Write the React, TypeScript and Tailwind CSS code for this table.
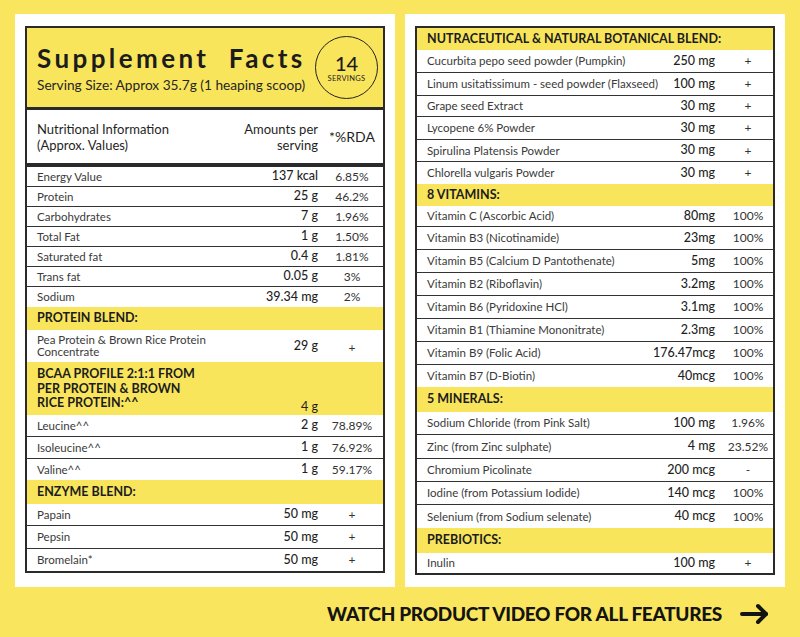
import React from 'react'

const font = { fontFamily: 'Lato, "Open Sans", sans-serif' }

type Row = { name: string; amt: string; rda: string; h: string }

const nutrition: Row[] = [
  { name: 'Energy Value', amt: '137 kcal', rda: '6.85%', h: 'h-[20px]' },
  { name: 'Protein', amt: '25 g', rda: '46.2%', h: 'h-[20px]' },
  { name: 'Carbohydrates', amt: '7 g', rda: '1.96%', h: 'h-[20px]' },
  { name: 'Total Fat', amt: '1 g', rda: '1.50%', h: 'h-[20px]' },
  { name: 'Saturated fat', amt: '0.4 g', rda: '1.81%', h: 'h-[20px]' },
  { name: 'Trans fat', amt: '0.05 g', rda: '3%', h: 'h-[20px]' },
  { name: 'Sodium', amt: '39.34 mg', rda: '2%', h: 'h-[20px]' },
]

const aminos: Row[] = [
  { name: 'Leucine^^', amt: '2 g', rda: '78.89%', h: 'h-[22px]' },
  { name: 'Isoleucine^^', amt: '1 g', rda: '76.92%', h: 'h-[22px]' },
  { name: 'Valine^^', amt: '1 g', rda: '59.17%', h: 'h-[21px]' },
]

const enzymes: Row[] = [
  { name: 'Papain', amt: '50 mg', rda: '+', h: 'h-[22px]' },
  { name: 'Pepsin', amt: '50 mg', rda: '+', h: 'h-[23px]' },
  { name: 'Bromelain*', amt: '50 mg', rda: '+', h: 'h-[22px]' },
]

const botanicals: Row[] = [
  { name: 'Cucurbita pepo seed powder (Pumpkin)', amt: '250 mg', rda: '+', h: 'h-[23px]' },
  { name: 'Linum usitatissimum - seed powder (Flaxseed)', amt: '100 mg', rda: '+', h: 'h-[23px]' },
  { name: 'Grape seed Extract', amt: '30 mg', rda: '+', h: 'h-[21px]' },
  { name: 'Lycopene 6% Powder', amt: '30 mg', rda: '+', h: 'h-[23px]' },
  { name: 'Spirulina Platensis Powder', amt: '30 mg', rda: '+', h: 'h-[22px]' },
  { name: 'Chlorella vulgaris Powder', amt: '30 mg', rda: '+', h: 'h-[22px]' },
]

const vitamins: Row[] = [
  { name: 'Vitamin C (Ascorbic Acid)', amt: '80mg', rda: '100%', h: 'h-[21px]' },
  { name: 'Vitamin B3 (Nicotinamide)', amt: '23mg', rda: '100%', h: 'h-[23px]' },
  { name: 'Vitamin B5 (Calcium D Pantothenate)', amt: '5mg', rda: '100%', h: 'h-[23px]' },
  { name: 'Vitamin B2 (Riboflavin)', amt: '3.2mg', rda: '100%', h: 'h-[23px]' },
  { name: 'Vitamin B6 (Pyridoxine HCl)', amt: '3.1mg', rda: '100%', h: 'h-[23px]' },
  { name: 'Vitamin B1 (Thiamine Mononitrate)', amt: '2.3mg', rda: '100%', h: 'h-[23px]' },
  { name: 'Vitamin B9 (Folic Acid)', amt: '176.47mcg', rda: '100%', h: 'h-[23px]' },
  { name: 'Vitamin B7 (D-Biotin)', amt: '40mcg', rda: '100%', h: 'h-[22px]' },
]

const minerals: Row[] = [
  { name: 'Sodium Chloride (from Pink Salt)', amt: '100 mg', rda: '1.96%', h: 'h-[23px]' },
  { name: 'Zinc (from Zinc sulphate)', amt: '4 mg', rda: '23.52%', h: 'h-[24px]' },
  { name: 'Chromium Picolinate', amt: '200 mcg', rda: '-', h: 'h-[23px]' },
  { name: 'Iodine (from Potassium Iodide)', amt: '140 mcg', rda: '100%', h: 'h-[23px]' },
  { name: 'Selenium (from Sodium selenate)', amt: '40 mcg', rda: '100%', h: 'h-[23px]' },
]

function LeftRow({ r, last }: { r: Row; last?: boolean }) {
  return (
    <div className={`${r.h} flex items-center text-[11.5px] ${last ? '' : 'border-b-[1.5px] border-[#333]'}`}>
      <div className="flex-1 pl-[10px] text-[#3a3a3a]">{r.name}</div>
      <div className="pr-[3px] text-right text-[12.5px] font-medium text-[#1f1f1f]">{r.amt}</div>
      <div className="w-[62px] text-center text-[12px] text-[#333]">{r.rda}</div>
    </div>
  )
}

function RightRow({ r, last }: { r: Row; last?: boolean }) {
  return (
    <div className={`${r.h} flex items-center ${last ? '' : 'border-b-[1.5px] border-[#333]'}`}>
      <div className="flex-1 pl-[10px] text-[11.5px] text-[#3a3a3a] whitespace-nowrap">{r.name}</div>
      <div className="text-right text-[12.5px] font-medium text-[#1f1f1f]">{r.amt}</div>
      <div className="w-[10px]" />
      <div className="w-[46px] mr-[2px] text-center text-[12px] text-[#333]">{r.rda}</div>
    </div>
  )
}

function Section({ title, h }: { title: string; h: string }) {
  return (
    <div className={`${h} flex items-center bg-[#f9e55c] pl-[10px] text-[12.5px] font-bold text-[#1c1c1c]`}>
      {title}
    </div>
  )
}

export default function App() {
  return (
    <div style={font} className="w-[800px] h-[637px] bg-[#fae65e] px-[15px] pt-[14px] overflow-hidden">
      <div className="flex gap-[10px]">
        {/* left card */}
        <div className="w-[380px] h-[573px] bg-white px-[10px] pt-[12px]">
          <div className="border-2 border-[#2a2a2a]">
            <div className="h-[82px] bg-[#f9e55c] flex items-center justify-between pl-[10px] pr-[5px] border-b-[3px] border-[#2a2a2a]">
              <div className="pt-[2px]">
                <div className="text-[26px] leading-[30px] font-bold tracking-[3.4px] text-[#1c1c1c]">
                  Supplement&nbsp; Facts
                </div>
                <div className="text-[13.7px] leading-[18px] mt-[3px] text-[#262626]">
                  Serving Size: Approx 35.7g (1 heaping scoop)
                </div>
              </div>
              <div className="w-[63px] h-[63px] rounded-full border-[1.5px] border-[#222] flex flex-col items-center justify-center">
                <div className="text-[20px] leading-[20px] font-medium text-[#1c1c1c] mt-[2px]">14</div>
                <div className="text-[7.5px] leading-[11px] tracking-[0.3px] text-[#222]">SERVINGS</div>
              </div>
            </div>
            <div className="h-[57px] flex items-center border-b-4 border-[#2a2a2a] text-[13px] leading-[16px] text-[#1f1f1f]">
              <div className="flex-1 pl-[10px]">
                Nutritional Information
                <br />
                (Approx. Values)
              </div>
              <div className="pr-[3px] text-right">
                Amounts per
                <br />
                serving
              </div>
              <div className="w-[62px] text-center text-[14px]">*%RDA</div>
            </div>
            {nutrition.map((r, i) => (
              <LeftRow key={r.name} r={r} last={i === nutrition.length - 1} />
            ))}
            <Section title="PROTEIN BLEND:" h="h-[23px]" />
            <div className="h-[32px] flex items-center">
              <div className="flex-1 pl-[10px] text-[11.5px] leading-[12px] text-[#3a3a3a]">
                Pea Protein &amp; Brown Rice Protein
                <br />
                Concentrate
              </div>
              <div className="pr-[3px] text-right text-[12.5px] font-medium text-[#1f1f1f]">29 g</div>
              <div className="w-[62px] text-center text-[12px] text-[#333] pt-[4px]">+</div>
            </div>
            <div className="h-[53px] flex items-start bg-[#f9e55c] pt-[5px]">
              <div className="flex-1 pl-[10px] text-[12.5px] leading-[14.5px] font-bold text-[#1c1c1c]">
                BCAA PROFILE 2:1:1 FROM
                <br />
                PER PROTEIN &amp; BROWN
                <br />
                RICE PROTEIN:^^
              </div>
              <div className="pr-[3px] pt-[31px] text-right text-[12.5px] text-[#1f1f1f]">4 g</div>
              <div className="w-[62px]" />
            </div>
            {aminos.map((r, i) => (
              <LeftRow key={r.name} r={r} last={i === aminos.length - 1} />
            ))}
            <Section title="ENZYME BLEND:" h="h-[24px]" />
            {enzymes.map((r, i) => (
              <LeftRow key={r.name} r={r} last={i === enzymes.length - 1} />
            ))}
          </div>
        </div>

        {/* right card */}
        <div className="w-[380px] h-[573px] bg-white px-[10px] pt-[12px]">
          <div className="border-2 border-[#2a2a2a]">
            <Section title="NUTRACEUTICAL & NATURAL BOTANICAL BLEND:" h="h-[22px]" />
            {botanicals.map((r, i) => (
              <RightRow key={r.name} r={r} last={i === botanicals.length - 1} />
            ))}
            <Section title="8 VITAMINS:" h="h-[22px]" />
            {vitamins.map((r, i) => (
              <RightRow key={r.name} r={r} last={i === vitamins.length - 1} />
            ))}
            <Section title="5 MINERALS:" h="h-[25px]" />
            {minerals.map((r, i) => (
              <RightRow key={r.name} r={r} last={i === minerals.length - 1} />
            ))}
            <Section title="PREBIOTICS:" h="h-[25px]" />
            <RightRow r={{ name: 'Inulin', amt: '100 mg', rda: '+', h: 'h-[20px]' }} last />
          </div>
        </div>
      </div>

      <div className="flex items-center justify-end pr-[15px] mt-[13px] gap-[18px]">
        <div className="text-[19px] font-black text-[#141414] tracking-[-0.3px]">
          WATCH PRODUCT VIDEO FOR ALL FEATURES
        </div>
        <svg width="30" height="22" viewBox="0 0 30 22" fill="none" stroke="#141414" strokeWidth="4" strokeLinecap="round" strokeLinejoin="round">
          <path d="M2 11h24" />
          <path d="M18 3l8 8-8 8" />
        </svg>
      </div>
    </div>
  )
}
